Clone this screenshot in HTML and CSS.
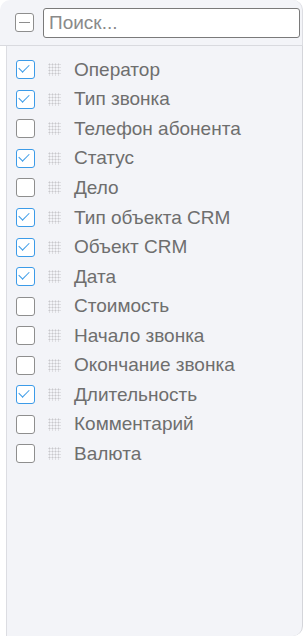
FILE: index.html
```html
<!DOCTYPE html>
<html lang="ru">
<head>
    <meta charset="UTF-8" />
    <title>Колонки</title>
    <link rel="stylesheet" href="styles.css">
</head>
<body>
<div class="panel">
    <div class="panel-head">
        <span class="box box-minus"></span>
        <input type="text" class="search" placeholder="Поиск..." />
    </div>
    <ul class="columns">
        <li class="col on"><span class="box"></span><span class="grip"></span>Оператор</li>
        <li class="col on"><span class="box"></span><span class="grip"></span>Тип звонка</li>
        <li class="col"><span class="box"></span><span class="grip"></span>Телефон абонента</li>
        <li class="col on"><span class="box"></span><span class="grip"></span>Статус</li>
        <li class="col"><span class="box"></span><span class="grip"></span>Дело</li>
        <li class="col on"><span class="box"></span><span class="grip"></span>Тип объекта CRM</li>
        <li class="col on"><span class="box"></span><span class="grip"></span>Объект CRM</li>
        <li class="col on"><span class="box"></span><span class="grip"></span>Дата</li>
        <li class="col"><span class="box"></span><span class="grip"></span>Стоимость</li>
        <li class="col"><span class="box"></span><span class="grip"></span>Начало звонка</li>
        <li class="col"><span class="box"></span><span class="grip"></span>Окончание звонка</li>
        <li class="col on"><span class="box"></span><span class="grip"></span>Длительность</li>
        <li class="col"><span class="box"></span><span class="grip"></span>Комментарий</li>
        <li class="col"><span class="box"></span><span class="grip"></span>Валюта</li>
    </ul>
</div>
</body>
</html>
```

FILE: styles.css
```css
* {
    box-sizing: border-box;
}

body {
    margin: 0;
    background-color: #ffffff;
    font-family: 'Liberation Sans', Arial, sans-serif;
}

.panel {
    width: 303px;
    height: 636px;
    display: flex;
    flex-direction: column;
}

.panel-head {
    height: 46px;
    display: flex;
    align-items: center;
    gap: 9px;
    padding: 0 6px 0 15px;
    background-color: #f3f4f8;
    border-bottom: 1px solid #d9dadf;
    border-radius: 10px 10px 0 0;
    border-right: 1px solid #dcdde2;
}

.box {
    flex: none;
    width: 19px;
    height: 19px;
    border: 1.5px solid #8e8e8e;
    border-radius: 3px;
    background-color: #ffffff;
    position: relative;
}

.box-minus::after {
    content: "";
    position: absolute;
    left: 3px;
    right: 3px;
    top: 7.5px;
    height: 1.5px;
    background-color: #8e8e8e;
}

.search {
    flex: 1;
    height: 30px;
    border: 1.5px solid #7a7a7a;
    border-radius: 3px;
    padding: 0 5px;
    font-family: inherit;
    font-size: 19px;
    color: #555;
    background-color: #ffffff;
    outline: none;
}

.search::placeholder {
    color: #8a8a8a;
}

.columns {
    flex: 1;
    list-style: none;
    margin: 0 0 0 6px;
    padding: 9px 0 0 9px;
    background-color: #f3f4f8;
    border-left: 1.5px solid #dcdde2;
    border-right: 1px solid #d4d5da;
    border-radius: 0 0 10px 0;
}

.col {
    height: 29.55px;
    display: flex;
    align-items: center;
    font-size: 19px;
    color: #6e6e6e;
}

.col.on .box {
    border-color: #3c9be8;
}

.col.on .box::after {
    content: "";
    position: absolute;
    left: 4px;
    top: 1px;
    width: 5px;
    height: 9px;
    border: solid #3c9be8;
    border-width: 0 1.6px 1.6px 0;
    transform: rotate(45deg);
}

.grip {
    flex: none;
    width: 13px;
    height: 13px;
    margin: 0 13px 0 13px;
    background-image: radial-gradient(circle, #c8c8cc 0.9px, transparent 1.1px);
    background-size: 3px 3px;
}
```
